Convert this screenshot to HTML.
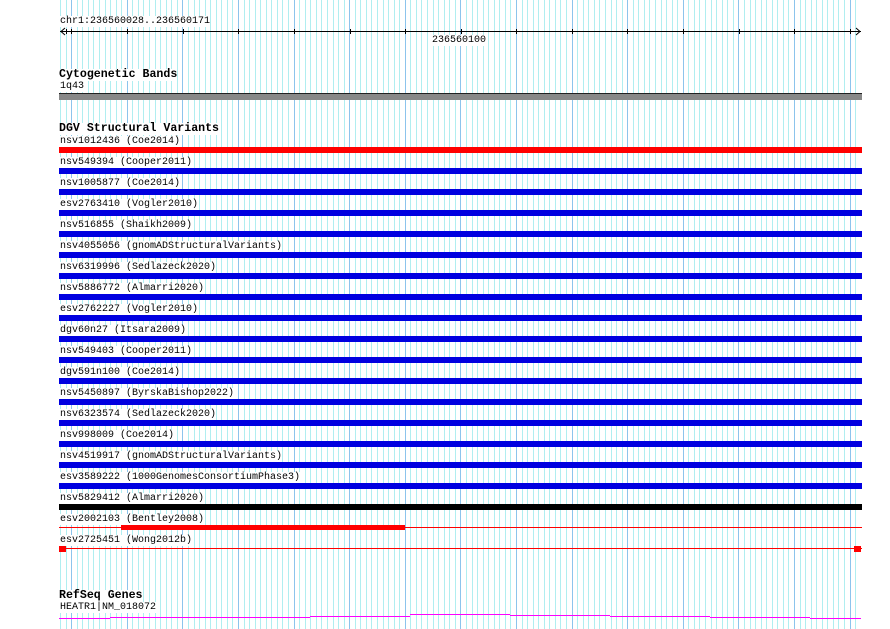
<!DOCTYPE html>
<html><head><meta charset="utf-8"><style>
html,body{margin:0;padding:0;background:#fff;}
#c{position:relative;width:890px;height:629px;overflow:hidden;background:#fff;}
.t{position:absolute;font-family:"Liberation Mono",monospace;font-size:10px;line-height:11px;background:#fff;color:#000;white-space:pre;}
.b{font-weight:bold;font-size:11.6px;line-height:12px;}
svg{position:absolute;left:0;top:0;}
</style></head><body><div id="c">
<svg id="g" width="890" height="629" shape-rendering="crispEdges"></svg>
<div id="o"></div>
</div>
<script>
var g=document.getElementById('g'),s='';
for(var j=-2;j<=141;j++){var x=Math.round(71.7+5.56*j-0.5);s+='<rect x="'+x+'" y="0" width="1" height="629" fill="'+(j%10==0?'#8cc4ec':'#b0eef0')+'"/>';}
s+='<rect x="60" y="31" width="801" height="1" fill="#000"/>';
s+='<path d="M65 28 L61 31.5 L65 35 M856 28 L860 31.5 L856 35" stroke="#000" fill="none" shape-rendering="auto"/>';
var tk=[66,71,127,183,238,294,350,405,461,516,572,627,683,739,794,850];
tk.forEach(function(x){s+='<rect x="'+x+'" y="29" width="1" height="5" fill="#000"/>';});
s+='<rect x="59" y="93" width="803" height="7" fill="#888"/><rect x="59" y="93" width="803" height="1" fill="#222"/>';
for(var i=0;i<18;i++){var y=147+21*i;var c=i==0?'#f00':(i==17?'#000':'#0000e0');s+='<rect x="59" y="'+y+'" width="803" height="6" fill="'+c+'"/>';}
s+='<rect x="59" y="527" width="803" height="1" fill="#f00"/><rect x="121" y="525" width="284" height="5" fill="#f00"/>';
s+='<rect x="59" y="548" width="803" height="1" fill="#f00"/><rect x="59" y="546" width="7" height="6" fill="#f00"/><rect x="854" y="546" width="7" height="6" fill="#f00"/>';
var m=[[59,110,618],[110,210,617],[210,310,617],[310,410,616],[410,510,614],[510,610,615],[610,710,616],[710,810,617],[810,861,618]];
m.forEach(function(a){s+='<rect x="'+a[0]+'" y="'+a[2]+'" width="'+(a[1]-a[0])+'" height="1" fill="#f0f"/>';});
g.innerHTML=s;
var o='',L=[['chr1:236560028..236560171',60,16,0],['236560100',432,35,0],['Cytogenetic Bands',59,69,1],['1q43',60,81,0],['DGV Structural Variants',59,123,1],['RefSeq Genes',59,590,1],['HEATR1|NM_018072',60,602,0]];
var n=['nsv1012436 (Coe2014)','nsv549394 (Cooper2011)','nsv1005877 (Coe2014)','esv2763410 (Vogler2010)','nsv516855 (Shaikh2009)','nsv4055056 (gnomADStructuralVariants)','nsv6319996 (Sedlazeck2020)','nsv5886772 (Almarri2020)','esv2762227 (Vogler2010)','dgv60n27 (Itsara2009)','nsv549403 (Cooper2011)','dgv591n100 (Coe2014)','nsv5450897 (ByrskaBishop2022)','nsv6323574 (Sedlazeck2020)','nsv998009 (Coe2014)','nsv4519917 (gnomADStructuralVariants)','esv3589222 (1000GenomesConsortiumPhase3)','nsv5829412 (Almarri2020)','esv2002103 (Bentley2008)','esv2725451 (Wong2012b)'];
n.forEach(function(t,i){L.push([t,60,136+21*i,0]);});
L.forEach(function(a){o+='<div class="t'+(a[3]?' b':'')+'" style="left:'+a[1]+'px;top:'+a[2]+'px">'+a[0]+'</div>';});
document.getElementById('o').innerHTML=o;
</script>
</body></html>
